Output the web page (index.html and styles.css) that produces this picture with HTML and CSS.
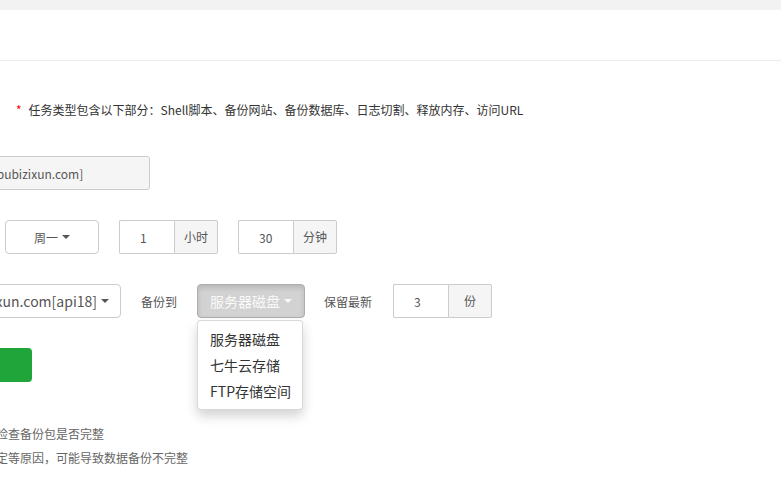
FILE: index.html
```html
<!DOCTYPE html>
<html lang="zh-CN">
<head>
    <meta charset="UTF-8">
    <meta name="viewport" content="width=device-width, initial-scale=1.0">
    <title>计划任务</title>
    <link rel="stylesheet" href="styles.css">
</head>
<body>
    <div class="top-strip"></div>
    <div class="page-head"></div>
    <div class="page-body">
        <form class="crontab-form">
            <div class="form-row">
                <span class="row-label">任务类型</span>
                <div class="btn-select type-select"><span class="select-text">备份网站</span><span class="caret"></span></div>
                <span class="type-tip"><span class="star">*</span>任务类型包含以下部分：Shell脚本、备份网站、备份数据库、日志切割、释放内存、访问URL</span>
            </div>
            <div class="form-row">
                <span class="row-label">任务名称</span>
                <input type="text" class="form-control name-input" value="备份网站[www.pubizixun.com]" readonly>
            </div>
            <div class="form-row">
                <span class="row-label">执行周期</span>
                <div class="btn-select cycle-select"><span class="select-text">每周</span><span class="caret"></span></div>
                <div class="btn-select week-select"><span class="select-text">周一</span><span class="caret"></span></div>
                <div class="input-group">
                    <input type="text" class="group-input" value="1">
                    <span class="group-addon">小时</span>
                </div>
                <div class="input-group">
                    <input type="text" class="group-input" value="30">
                    <span class="group-addon">分钟</span>
                </div>
            </div>
            <div class="form-row">
                <span class="row-label">备份网站</span>
                <div class="btn-select site-select"><span class="select-text">www.pubizixun.com[api18]</span><span class="caret"></span></div>
                <span class="inline-label backup-label">备份到</span>
                <div class="dropdown">
                    <div class="btn-select store-select open"><span class="select-text">服务器磁盘</span><span class="caret"></span></div>
                    <ul class="dropdown-menu">
                        <li>服务器磁盘</li>
                        <li>七牛云存储</li>
                        <li>FTP存储空间</li>
                    </ul>
                </div>
                <span class="inline-label keep-label">保留最新</span>
                <div class="input-group keep-group">
                    <input type="text" class="group-input" value="3">
                    <span class="group-addon">份</span>
                </div>
            </div>
            <div class="form-row">
                <span class="row-label"></span>
                <button type="button" class="btn-submit">添加任务</button>
            </div>
            <ul class="help-list">
                <li>请您定期检查备份包是否完整</li>
                <li>网络不稳定等原因，可能导致数据备份不完整</li>
            </ul>
        </form>
    </div>
</body>
</html>
```

FILE: styles.css
```css
html, body {
    margin: 0;
    padding: 0;
    background: #fff;
}
body {
    font-family: "Microsoft YaHei", "Noto Sans CJK SC", sans-serif;
    font-size: 12px;
    color: #555;
    overflow: hidden;
}
.top-strip {
    height: 10px;
    background: #f2f2f2;
}
.page-head {
    height: 50px;
    border-bottom: 1px solid #ebebeb;
}
.page-body {
    padding-top: 31px;
    overflow: hidden;
}
.crontab-form {
    margin-left: -200px;
}
.form-row {
    display: flex;
    align-items: center;
    height: 34px;
    margin-bottom: 30px;
}
.row-label {
    width: 90px;
    padding-right: 10px;
    text-align: right;
    flex-shrink: 0;
}
.btn-select {
    box-sizing: border-box;
    height: 34px;
    display: flex;
    align-items: center;
    justify-content: center;
    border: 1px solid #ccc;
    border-radius: 4px;
    background: #fff;
    color: #555;
    overflow: hidden;
    white-space: nowrap;
    flex-shrink: 0;
}
.caret {
    display: inline-block;
    width: 0;
    height: 0;
    margin-left: 4px;
    border-top: 4px solid #555;
    border-left: 4px solid transparent;
    border-right: 4px solid transparent;
}
.type-select {
    width: 96px;
}
.type-tip {
    margin-left: 20px;
    color: #333;
    white-space: nowrap;
}
.star {
    color: #f00;
    margin-right: 7px;
}
.form-control {
    box-sizing: border-box;
    height: 34px;
    border: 1px solid #ccc;
    border-radius: 3px;
    font-family: inherit;
    font-size: 12px;
    color: #555;
    outline: none;
}
.name-input {
    width: 250px;
    padding: 0 12px 0 12px;
    background: #f5f5f5;
}
.cycle-select {
    width: 85px;
}
.week-select {
    width: 94px;
    margin-left: 20px;
}
.input-group {
    display: flex;
    height: 34px;
    margin-left: 20px;
    flex-shrink: 0;
}
.keep-group {
    margin-left: 21px;
}
.group-input {
    box-sizing: border-box;
    width: 55px;
    height: 34px;
    padding: 0 0 0 20px;
    border: 1px solid #ccc;
    border-right: 0;
    border-radius: 2px 0 0 2px;
    font-family: inherit;
    font-size: 12px;
    color: #555;
    outline: none;
}
.group-addon {
    box-sizing: border-box;
    width: 44px;
    height: 34px;
    line-height: 32px;
    text-align: center;
    background: #f5f5f5;
    border: 1px solid #ccc;
    border-radius: 0 2px 2px 0;
    color: #555;
}
.site-select {
    width: 221px;
    justify-content: flex-end;
    padding: 0 11px;
    font-size: 14px;
}
.inline-label {
    white-space: nowrap;
    flex-shrink: 0;
}
.backup-label {
    margin-left: 20px;
}
.keep-label {
    margin-left: 19px;
}
.dropdown {
    position: relative;
    margin-left: 20px;
}
.store-select {
    width: 108px;
    font-size: 14px;
}
.store-select.open {
    background: #d2d2d2;
    border-color: #adadad;
    color: #fafafa;
    box-shadow: inset 0 3px 5px rgba(0, 0, 0, .125);
}
.store-select.open .caret {
    border-top-color: #fafafa;
}
.dropdown-menu {
    position: absolute;
    top: 36px;
    left: 0;
    width: 106px;
    margin: 0;
    padding: 5px 0;
    list-style: none;
    background: #fff;
    border: 1px solid rgba(0, 0, 0, .15);
    border-radius: 4px;
    box-shadow: 0 6px 12px rgba(0, 0, 0, .175);
    box-sizing: border-box;
    z-index: 10;
}
.dropdown-menu li {
    padding: 0 12px;
    line-height: 26px;
    font-size: 14px;
    color: #333;
    white-space: nowrap;
}
.btn-submit {
    width: 132px;
    height: 34px;
    border: 0;
    border-radius: 4px;
    background: #20a53a;
    color: #fff;
    font-family: inherit;
    font-size: 14px;
}
.help-list {
    list-style: none;
    margin: 40px 0 0 148px;
    padding: 0;
    color: #666;
}
.help-list li {
    line-height: 24px;
    white-space: nowrap;
}
```
